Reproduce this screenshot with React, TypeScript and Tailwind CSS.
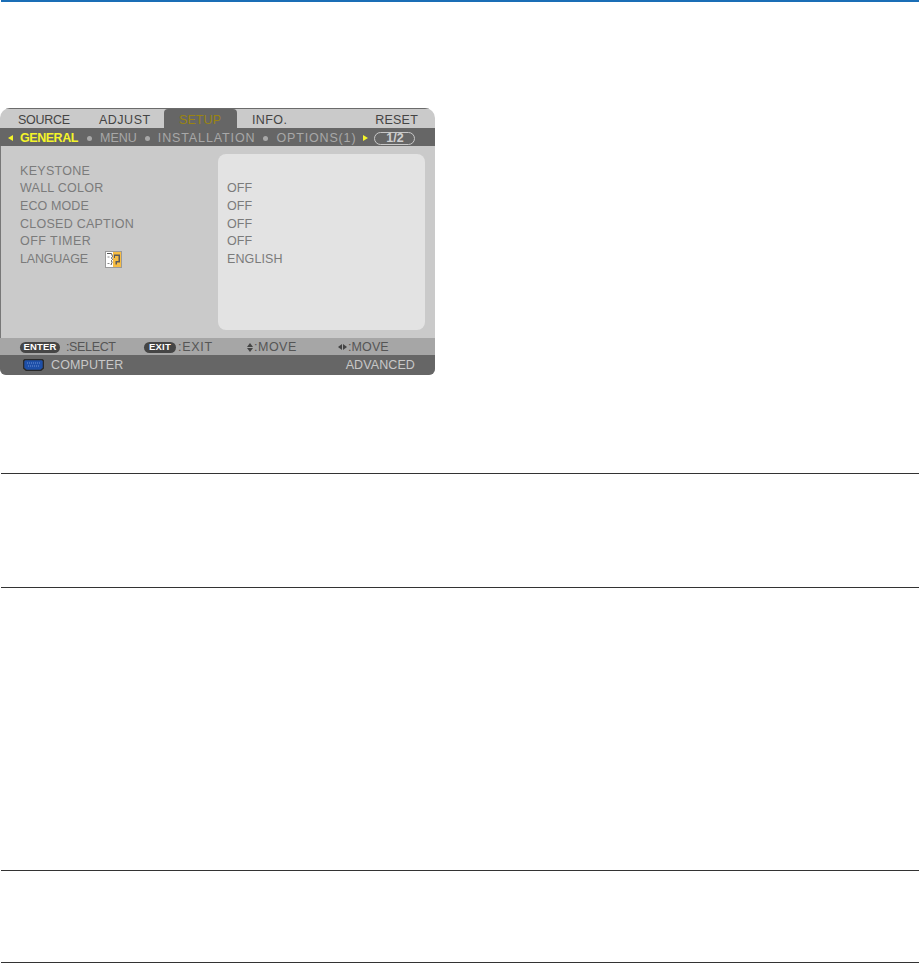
import type { ReactNode } from 'react'

const rows = [
  { label: 'KEYSTONE', value: '', track: 'tracking-[0.3px]' },
  { label: 'WALL COLOR', value: 'OFF', track: 'tracking-[0.25px]' },
  { label: 'ECO MODE', value: 'OFF', track: 'tracking-[0.1px]' },
  { label: 'CLOSED CAPTION', value: 'OFF', track: 'tracking-[0.25px]' },
  { label: 'OFF TIMER', value: 'OFF', track: 'tracking-[0.45px]' },
  { label: 'LANGUAGE', value: 'ENGLISH', track: 'tracking-[-0.2px]' },
]

function Dot() {
  return <span className="mx-[8px] h-[5px] w-[5px] rounded-full bg-[#a8a8a8]" />
}

function KeyPill({ children, className }: { children: ReactNode; className: string }) {
  return (
    <span className={`flex h-[11px] items-center justify-center rounded-full bg-[#454545] text-[9.5px] font-bold tracking-[0.2px] text-white ${className}`}>
      {children}
    </span>
  )
}

function LanguageIcon() {
  return (
    <svg width="17" height="17" viewBox="0 0 17 17" className="ml-[17px]">
      <rect x="0.5" y="0.5" width="16" height="16" fill="#fff" stroke="#9a9a9a" />
      <rect x="8" y="1" width="8" height="15" fill="#f6bd44" />
      <path d="M2 2.5h4.5l1 3-1 1.5 1 1.5-1 1 .5 2-1 2.5" fill="none" stroke="#555" />
      <path d="M2.5 6h2M2.5 12.5h2" stroke="#888" />
      <path d="M9 3.5h6v8h-3v2h-1.5v-3.5h3v-5H10v2H9z" fill="#5a5a5a" />
    </svg>
  )
}

function ComputerIcon() {
  return (
    <svg width="21" height="12" viewBox="0 0 21 12">
      <path d="M2 .5h17l1.5 1.5v7L17.5 11.5h-14L.5 9V2z" fill="#1d4fa8" stroke="#2a2a2a" strokeWidth="1.6" />
      <path d="M4 4h13M5 7h11" stroke="#6f93d6" strokeDasharray="1 1" />
    </svg>
  )
}

function ProjectorMenu() {
  return (
    <div className="flex h-[267px] w-[435px] flex-col overflow-hidden rounded-tl-[10px] rounded-tr-[10px] rounded-br-[6px] rounded-bl-[6px] bg-[#cacaca] font-['Liberation_Sans',sans-serif] text-[12.5px] leading-none">
      {/* Tabs */}
      <div className="flex h-[20px] shrink-0 items-stretch border-t border-[#6b6b6b] text-[#444]">
        <span className="ml-[18px] flex w-[81px] items-center pt-[3px] tracking-[-0.3px]">SOURCE</span>
        <span className="flex w-[65px] items-center pt-[3px] tracking-[0.5px]">ADJUST</span>
        <span className="flex w-[73px] items-center rounded-t-[4px] bg-[#666] pl-[15px] pt-[3px] tracking-[0.1px] text-[#9a8410]">
          SETUP
        </span>
        <span className="ml-[15px] flex items-center pt-[3px] tracking-[0.4px]">INFO.</span>
        <span className="ml-auto mr-[17px] flex items-center pt-[3px] tracking-[0.2px]">RESET</span>
      </div>

      {/* Sub tabs */}
      <div className="flex h-[18px] shrink-0 items-center bg-[#666] pl-[8px] pt-[2px] text-[#a8a8a8]">
        <span className="mr-[7px] h-0 w-0 border-y-[3px] border-r-[5px] border-y-transparent border-r-[#f5f52a]" />
        <span className="mr-[1px] font-bold tracking-[-0.45px] text-[#f5f52a]">GENERAL</span>
        <Dot />
        <span className="tracking-[0px]">MENU</span>
        <Dot />
        <span className="tracking-[0.88px]">INSTALLATION</span>
        <Dot />
        <span className="tracking-[0.85px]">OPTIONS(1)</span>
        <span className="ml-[7px] h-0 w-0 border-y-[3px] border-l-[5px] border-y-transparent border-l-[#f5f52a]" />
        <span className="ml-[6px] flex h-[13px] w-[41px] items-center justify-center rounded-full border border-[#c8c8c8] font-bold text-[#d0d0d0]">
          1/2
        </span>
      </div>

      {/* Main area */}
      <div className="flex h-[192px] shrink-0 border-l border-[#777] pl-[19px] pr-[10px] pt-[8px] text-[#7b7b7b]">
        <div className="flex w-[198px] flex-col pt-[8px]">
          {rows.map((row) => (
            <div key={row.label} className={`flex h-[17.7px] shrink-0 items-center ${row.track}`}>
              {row.label}
              {row.label === 'LANGUAGE' && <LanguageIcon />}
            </div>
          ))}
        </div>
        <div className="flex h-[176px] w-[207px] flex-col rounded-[8px] bg-[#e3e3e3] pl-[9px] pt-[8px] tracking-[0.1px]">
          {rows.map((row) => (
            <div key={row.label} className="flex h-[17.7px] shrink-0 items-center">
              {row.value}
            </div>
          ))}
        </div>
      </div>

      {/* Key hints */}
      <div className="flex h-[17px] shrink-0 items-center bg-[#a6a6a6] pl-[20px] pt-[1px] text-[#555]">
        <KeyPill className="w-[40px]">ENTER</KeyPill>
        <span className="ml-[6px] w-[78px] tracking-[-0.35px]">:SELECT</span>
        <KeyPill className="w-[32px]">EXIT</KeyPill>
        <span className="ml-[2px] w-[69px] tracking-[0.7px]">:EXIT</span>
        <span className="flex w-[91px] items-center tracking-[0.5px]">
          <span className="mr-[1px] flex flex-col gap-[1px]">
            <span className="h-0 w-0 border-x-[3px] border-b-[4px] border-x-transparent border-b-[#444]" />
            <span className="h-0 w-0 border-x-[3px] border-t-[4px] border-x-transparent border-t-[#444]" />
          </span>
          :MOVE
        </span>
        <span className="flex items-center tracking-[0.1px]">
          <span className="h-0 w-0 border-y-[3px] border-r-[4px] border-y-transparent border-r-[#444]" />
          <span className="ml-[1px] h-0 w-0 border-y-[3px] border-l-[4px] border-y-transparent border-l-[#444]" />
          <span className="ml-[1px]">:MOVE</span>
        </span>
      </div>

      {/* Status */}
      <div className="flex h-[20px] shrink-0 items-center bg-[#666] pl-[23px] pr-[20px] tracking-[0.1px] text-[#c8c8c8]">
        <ComputerIcon />
        <span className="ml-[7px]">COMPUTER</span>
        <span className="ml-auto">ADVANCED</span>
      </div>
    </div>
  )
}

export default function App() {
  return (
    <div className="h-[963px] w-[919px] overflow-hidden bg-white">
      <div className="ml-[1px] h-[2px] bg-[#1a6eb6]" />
      <div className="pt-[106px]">
        <ProjectorMenu />
      </div>
      <div className="ml-[1px] mt-[98px] h-[1px] bg-[#333]" />
      <div className="ml-[1px] mt-[113px] h-[1px] bg-[#333]" />
      <div className="ml-[1px] mt-[282px] h-[1px] bg-[#333]" />
      <div className="ml-[1px] mt-[91px] h-[1px] bg-[#333]" />
    </div>
  )
}
